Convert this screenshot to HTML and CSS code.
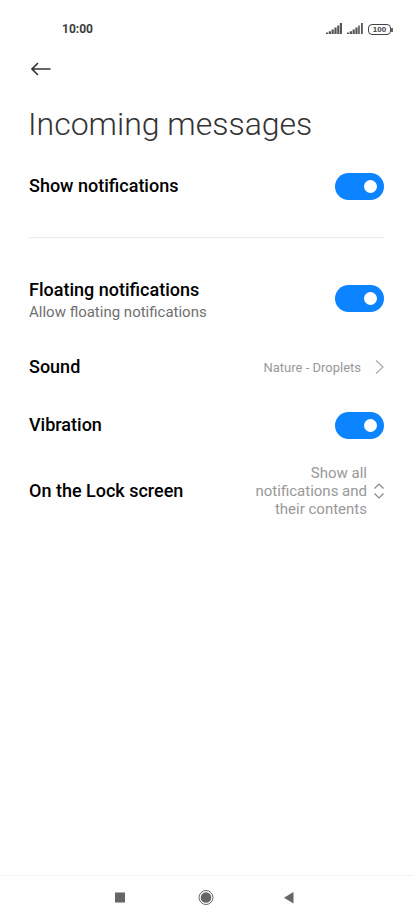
FILE: index.html
```html
<!DOCTYPE html>
<html lang="en">
<head>
<meta charset="utf-8">
<meta name="viewport" content="width=device-width, initial-scale=1">
<title>Incoming messages</title>
<link rel="stylesheet" href="styles.css">
</head>
<body>
<div class="screen">
  <div class="status">
    <time class="clock">10:00</time>
    <div class="indicators">
      <svg class="signal" viewBox="0 0 16 12" aria-hidden="true"><path d="M0 9.500h2.200V11H0zM2.800 8.200H5V11H2.800zM5.600 6.500h2.200V11H5.600zM8.400 4.500h2.200V11H8.400zM11.200 2.500h2V11h-2zM13.800 0H16v11h-2.200z"/></svg>
      <svg class="signal" viewBox="0 0 16 12" aria-hidden="true"><path d="M0 9.500h2.200V11H0zM2.800 8.200H5V11H2.800zM5.600 6.500h2.200V11H5.600zM8.400 4.500h2.200V11H8.400zM11.200 2.500h1.600V11h-1.600zM14 0h1.800v11H14z"/></svg>
      <span class="battery">100</span>
    </div>
  </div>

  <header class="header">
    <button class="back" type="button" aria-label="Back">
      <svg viewBox="0 0 20 14" aria-hidden="true"><path d="M7 1 1 7l6 6M1 7h18.500"/></svg>
    </button>
    <h1 class="title">Incoming messages</h1>
  </header>

  <main class="settings">
    <section class="group">
      <div class="row">
        <label class="name" for="show">Show notifications</label>
        <input class="switch" id="show" type="checkbox" role="switch" checked>
      </div>
    </section>
    <section class="group">
      <div class="row row-tall">
        <label class="name" for="floating">Floating notifications
          <small class="hint">Allow floating notifications</small>
        </label>
        <input class="switch" id="floating" type="checkbox" role="switch" checked>
      </div>
      <a class="row" href="#sound">
        <span class="name">Sound</span>
        <span class="value">Nature - Droplets</span>
        <svg class="chevron" viewBox="0 0 9 14" aria-hidden="true"><path d="m1 .5 7 6.500-7 6.500"/></svg>
      </a>
      <div class="row">
        <label class="name" for="vibration">Vibration</label>
        <input class="switch" id="vibration" type="checkbox" role="switch" checked>
      </div>
      <div class="row">
        <label class="name" for="lock">On the Lock screen</label>
        <select class="picker" id="lock">
          <option>Show all notifications and their contents</option>
        </select>
        <svg class="updown" viewBox="0 0 10 16" aria-hidden="true"><path d="m.5 5.500 4.500-4.500 4.500 4.500M.5 10.500 5 15l4.500-4.500"/></svg>
      </div>
    </section>
  </main>

  <nav class="navbar" aria-label="System">
    <button type="button" aria-label="Recent apps"><svg viewBox="0 0 16 16" aria-hidden="true"><path d="M1 2.500h10v10H1z"/></svg></button>
    <button type="button" aria-label="Home"><svg viewBox="0 0 16 16" aria-hidden="true"><circle class="ring" cx="8" cy="7.500" r="7"/><circle cx="8" cy="7.500" r="5.300"/></svg></button>
    <button type="button" aria-label="Go back"><svg viewBox="0 0 16 16" aria-hidden="true"><path d="M11.500 2v11.500L2 7.800z"/></svg></button>
  </nav>
</div>
</body>
</html>
```
FILE: styles.css
```css
* {
  box-sizing: border-box;
}

body {
  margin: 0;
  background: #fefefe;
  color: #000;
  font-family: Roboto, "Liberation Sans", sans-serif;
}

button {
  padding: 0;
  border: 0;
  background: none;
}

svg {
  display: block;
  flex: none;
}

.screen {
  display: flex;
  flex-direction: column;
  min-height: 100vh;
}

.status {
  display: flex;
  align-items: center;
  justify-content: space-between;
  height: 58px;
  padding: 0 20px 0 62px;
}

.clock {
  color: #3c3c3c;
  font-size: 12px;
  font-weight: 700;
}

.indicators {
  display: flex;
  align-items: center;
  gap: 5px;
}

.signal {
  width: 16px;
  height: 12px;
  fill: #555;
}

.battery {
  position: relative;
  width: 23px;
  margin-right: 2px;
  border: 1px solid #444;
  border-radius: 4px;
  color: #444;
  font-family: "Liberation Sans", sans-serif;
  font-size: 8px;
  font-weight: 700;
  line-height: 9px;
  text-align: center;
}

.battery::after {
  content: "";
  position: absolute;
  top: 3px;
  right: -3px;
  width: 2px;
  height: 4px;
  background: #666;
}

.header {
  padding: 0 28px;
}

.back {
  display: flex;
  align-items: center;
  width: 26px;
  height: 22px;
  padding-left: 3px;
}

.back svg {
  width: 20px;
  height: 14px;
  fill: none;
  stroke: #333;
  stroke-width: 1.6;
}

.title {
  margin: 24px 0 0;
  color: #333;
  font-size: 32px;
  font-weight: 300;
  line-height: 40px;
}

.settings {
  flex: 1;
  padding: 13px 29px 0;
}

.group + .group {
  margin-top: 22px;
  padding-top: 20px;
  border-top: 1px solid #ebebeb;
}

.row {
  display: flex;
  align-items: center;
  min-height: 58px;
  color: inherit;
  text-decoration: none;
}

.row-tall {
  min-height: 80px;
}

.row-tall .name {
  padding-top: 4px;
}

.name {
  flex: 1;
  font-size: 18px;
  font-weight: 500;
  line-height: 24px;
}

.hint {
  display: block;
  color: #707070;
  font-size: 15px;
  font-weight: 400;
  line-height: 20px;
}

.value {
  color: #999;
  font-size: 13px;
}

.chevron {
  width: 9px;
  height: 14px;
  margin-left: 14px;
  fill: none;
  stroke: #aaa;
  stroke-width: 1.2;
}

.switch {
  appearance: none;
  display: flex;
  align-items: center;
  flex: none;
  width: 49px;
  height: 27px;
  margin: 0;
  padding: 7px;
  border-radius: 14px;
  background: #ccc;
}

.switch::before {
  content: "";
  width: 13px;
  height: 13px;
  border-radius: 50%;
  background: #fff;
}

.switch:checked {
  justify-content: flex-end;
  background: #0d84ff;
}

.picker {
  appearance: none;
  width: 120px;
  margin: 10px 0;
  padding: 0;
  border: 0;
  background: none;
  color: #999;
  font: 400 15px/18px Roboto, "Liberation Sans", sans-serif;
  text-align: right;
  white-space: normal;
}

.updown {
  width: 10px;
  height: 16px;
  margin-left: 7px;
  fill: none;
  stroke: #888;
  stroke-width: 1.2;
}

.navbar {
  display: grid;
  grid-template-columns: repeat(3, 84px);
  justify-content: center;
  height: 44px;
  padding-right: 1px;
  border-top: 1px solid #f3f3f3;
}

.navbar button {
  display: flex;
  align-items: center;
  justify-content: center;
}

.navbar svg {
  width: 16px;
  height: 16px;
  fill: #666;
}

.navbar .ring {
  fill: none;
  stroke: #666;
}
```
